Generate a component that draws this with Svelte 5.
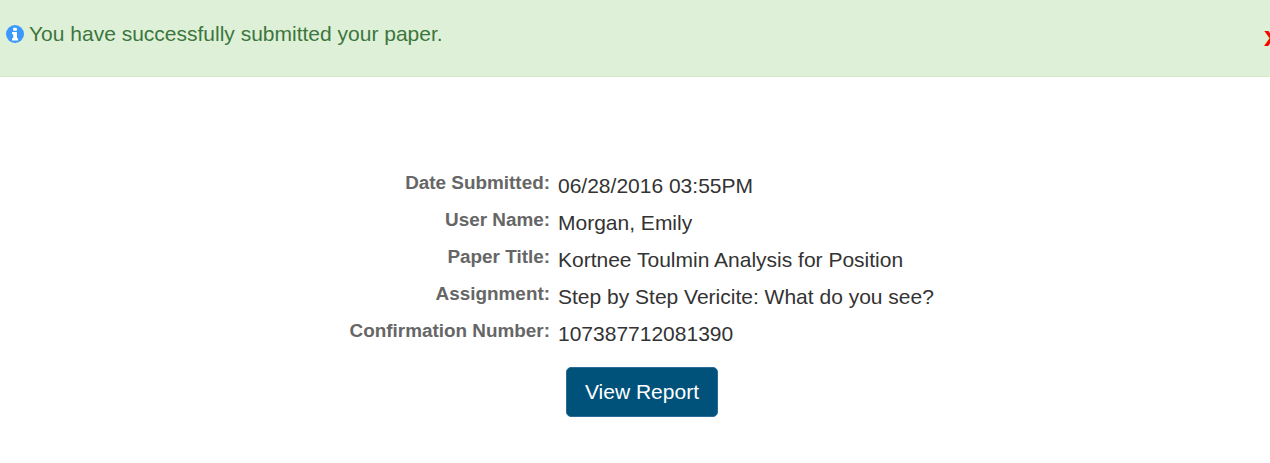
<script lang="ts">
	type Row = { label: string; value: string };

	const rows: Row[] = [
		{ label: 'Date Submitted:', value: '06/28/2016 03:55PM' },
		{ label: 'User Name:', value: 'Morgan, Emily' },
		{ label: 'Paper Title:', value: 'Kortnee Toulmin Analysis for Position' },
		{ label: 'Assignment:', value: 'Step by Step Vericite: What do you see?' },
		{ label: 'Confirmation Number:', value: '107387712081390' }
	];
</script>

<div class="page">
	<div class="alert">
		<svg class="alert__icon" viewBox="0 0 18 18" width="18" height="18" aria-hidden="true">
			<circle cx="9" cy="9" r="9" fill="#3b99fc" />
			<rect x="7.2" y="2.8" width="3.6" height="3" rx="0.5" fill="#fff" />
			<path d="M6 7h5v6.2h1.1V15.4H6v-2.2h1.2V9.2H6z" fill="#fff" />
		</svg>
		<span class="alert__text">You have successfully submitted your paper.</span>
		<span class="alert__close">x</span>
	</div>

	<main class="summary">
		<dl class="details">
			{#each rows as row}
				<dt>{row.label}</dt>
				<dd>{row.value}</dd>
			{/each}
		</dl>
		<button type="button" class="btn">View Report</button>
	</main>
</div>

<style>
	:global(body) {
		margin: 0;
		background: #fff;
		overflow: hidden;
	}

	.page {
		width: 1270px;
		height: 463px;
		overflow: hidden;
		font-family: 'Liberation Sans', Arial, sans-serif;
	}

	.alert {
		box-sizing: border-box;
		height: 77px;
		display: flex;
		align-items: flex-start;
		gap: 5px;
		padding: 22px 0 0 6px;
		background: #dff0d8;
		border-bottom: 1px solid #d6e9c6;
		color: #3c763d;
		font-size: 21px;
		line-height: 24px;
		position: relative;
	}

	.alert__icon {
		margin-top: 3px;
		flex: none;
	}

	.alert__close {
		position: absolute;
		left: 1264px;
		top: 25px;
		color: #f00;
		font-weight: bold;
		font-size: 28px;
	}

	.summary {
		display: flex;
		flex-direction: column;
		padding-top: 90px;
	}

	.details {
		display: grid;
		grid-template-columns: 550px 1fr;
		grid-auto-rows: 37px;
		column-gap: 8px;
		margin: 0;
	}

	dt {
		text-align: right;
		font-weight: bold;
		font-size: 18.9px;
		line-height: 32px;
		color: #666;
	}

	dd {
		margin: 0;
		font-size: 21px;
		line-height: 37px;
		color: #333;
	}

	.btn {
		box-sizing: border-box;
		align-self: flex-start;
		margin: 15px 0 0 566px;
		width: 152px;
		height: 50px;
		background: #00527a;
		border: 1px solid #2a6c96;
		border-radius: 5px;
		color: #fff;
		font-family: inherit;
		font-size: 21px;
		padding: 0;
	}
</style>
